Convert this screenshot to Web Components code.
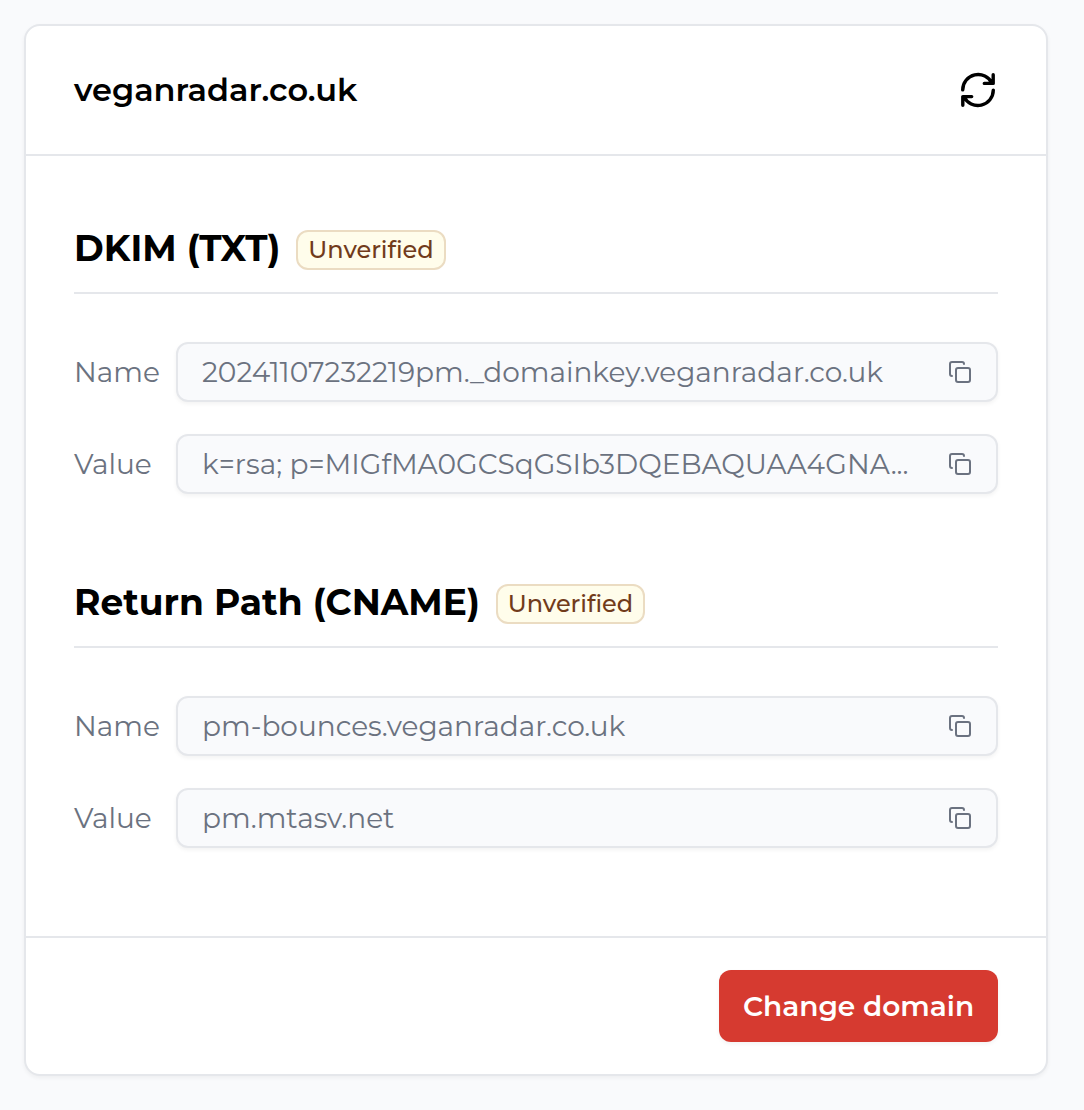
<!DOCTYPE html>
<html lang="en">
<head>
<meta charset="utf-8">
<title>Domain settings</title>
<style>
body{margin:0;background:#f9fafc;font-family:Montserrat,Inter,sans-serif;color:#000}
</style>
</head>
<body>
<domain-card>
  <span slot="title">veganradar.co.uk</span>
  <refresh-icon slot="action"></refresh-icon>
  <record-section>
    <span slot="heading">DKIM (TXT)</span>
    <status-badge slot="status">Unverified</status-badge>
    <copy-field label="Name">20241107232219pm._domainkey.veganradar.co.uk</copy-field>
    <copy-field label="Value">k=rsa; p=MIGfMA0GCSqGSIb3DQEBAQUAA4GNA...</copy-field>
  </record-section>
  <record-section>
    <span slot="heading">Return Path (CNAME)</span>
    <status-badge slot="status">Unverified</status-badge>
    <copy-field label="Name">pm-bounces.veganradar.co.uk</copy-field>
    <copy-field label="Value">pm.mtasv.net</copy-field>
  </record-section>
  <danger-button slot="footer">Change domain</danger-button>
</domain-card>
<script>
const define = (name, html) => customElements.define(name, class extends HTMLElement {
  constructor() {
    super();
    this.attachShadow({ mode: 'open' }).innerHTML = html;
  }
  connectedCallback() {
    const label = this.shadowRoot.querySelector('.label');
    if (label) label.textContent = this.getAttribute('label');
  }
});

define('domain-card', `<style>
:host{display:flex;flex-direction:column;box-sizing:border-box;width:1024px;height:1052px;margin:24px;background:#fff;border:2px solid #e5e7eb;border-radius:16px;box-shadow:0 2px 4px rgba(0,0,0,.05)}
header{display:flex;align-items:center;justify-content:space-between;box-sizing:border-box;height:130px;padding:0 50px 0 48px;border-bottom:2px solid #e5e7eb}
h1{margin:0;font-size:32px;font-weight:600;line-height:40px}
main{display:flex;flex-direction:column;gap:90px;flex:1;padding:74px 48px 0}
footer{display:flex;align-items:center;justify-content:flex-end;box-sizing:border-box;height:138px;padding:0 48px;border-top:2px solid #e5e7eb}
</style><header><h1><slot name="title"></slot></h1><slot name="action"></slot></header><main><slot></slot></main><footer><slot name="footer"></slot></footer>`);

define('refresh-icon', `<style>:host{display:block;width:36px;height:36px}svg{display:block}</style>
<svg width="36" height="36" viewBox="0 0 36 36" fill="none" stroke="#000" stroke-width="3.4" stroke-linecap="round" stroke-linejoin="round"><path d="M2.7 17.9A15.4 15.4 0 0 1 32 11.3M33.2 2.8v8.6h-8.9M33.3 18.1A15.4 15.4 0 0 1 4 24.7M2.8 33.2v-8.6h8.9"/></svg>`);

define('record-section', `<style>
:host{display:block}
.head{display:flex;align-items:flex-start;gap:16px;height:62px;border-bottom:2px solid #e5e7eb}
h2{margin:0;font-size:36px;font-weight:700;line-height:36px;white-space:nowrap}
.fields{display:flex;flex-direction:column;gap:32px;padding-top:48px}
</style><div class="head"><h2><slot name="heading"></slot></h2><slot name="status"></slot></div><div class="fields"><slot></slot></div>`);

define('status-badge', `<style>
:host{display:flex;align-items:center;box-sizing:border-box;height:40px;padding:0 10px;border:2px solid #ebdcc2;border-radius:12px;background:#fffdeb;color:#713b1b;font-size:24px;font-weight:500;line-height:32px}
</style><span><slot></slot></span>`);

define('copy-field', `<style>
:host{display:flex;align-items:center;color:#6b7280;font-size:28px;line-height:40px}
.label{width:102px;flex:none}
.box{display:flex;align-items:center;justify-content:space-between;box-sizing:border-box;flex:1;height:60px;padding:0 24px;border:2px solid #e5e7eb;border-radius:12px;background:#f9fafc;box-shadow:0 2px 4px rgba(0,0,0,.05)}
.value{white-space:nowrap}
svg{display:block;flex:none}
</style><span class="label"></span><div class="box"><span class="value"><slot></slot></span>
<svg width="24" height="24" viewBox="0 0 24 24" fill="none" stroke="#6b7280" stroke-width="2" stroke-linecap="round" stroke-linejoin="round"><rect x="8" y="8" width="14" height="14" rx="2"/><path d="M4 16c-1.1 0-2-.9-2-2V4c0-1.1.9-2 2-2h10c1.1 0 2 .9 2 2"/></svg></div>`);

define('danger-button', `<style>
:host{display:block}
button{display:flex;align-items:center;justify-content:center;width:279px;height:72px;padding:0;border:0;border-radius:12px;background:#d63a30;color:#fff;font:600 28px/40px Montserrat,Inter,sans-serif;box-shadow:0 2px 4px rgba(0,0,0,.05)}
</style><button type="button"><span><slot></slot></span></button>`);
</script>
</body>
</html>
